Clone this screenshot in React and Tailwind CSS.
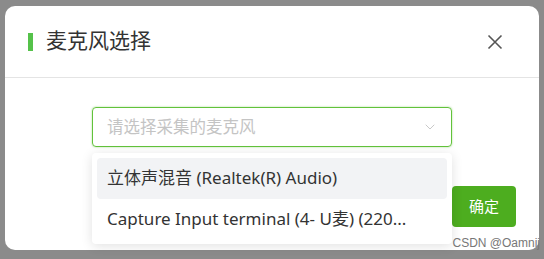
import { ChevronDown } from "lucide-react";

function App() {
  const options = [
    "立体声混音 (Realtek(R) Audio)",
    "Capture Input terminal (4- U麦) (220...",
  ];

  return (
    <div className="relative h-[259px] w-[544px] overflow-hidden bg-[#8b8b8b] pl-[5px] pt-[6px] font-['Noto_Sans','Noto_Sans_CJK_SC',sans-serif]">
      <div className="relative flex h-[244px] w-[534px] flex-col rounded-[10px] bg-white">
        {/* header */}
        <div className="flex h-[72px] shrink-0 items-center border-b border-[#e4e4e4] pl-[23px] pr-[36px]">
          <span className="h-[18px] w-[5px] bg-[#55c24a]" />
          <h2 className="ml-[13px] mb-[2px] text-[21px] leading-none text-[#333]">麦克风选择</h2>
          <button className="ml-auto text-[#555]">
            <svg width="16" height="16" viewBox="0 0 16 16" fill="none" stroke="currentColor" strokeWidth="1.6">
              <path d="M1.5 1.5 L14.5 14.5 M14.5 1.5 L1.5 14.5" />
            </svg>
          </button>
        </div>

        {/* body */}
        <div className="pl-[87px] pt-[29px]">
          <div className="flex h-[40px] w-[360px] items-center justify-between rounded-[4px] border border-[#62c23b] pl-[14px] pr-[13px] shadow-[0_0_2px_rgba(98,194,59,0.6)]">
            <span className="text-[16.5px] text-[#c4c4c4]">请选择采集的麦克风</span>
            <ChevronDown className="h-[16px] w-[16px] text-[#c0c0c0]" strokeWidth={1.3} />
          </div>
        </div>

        {/* footer */}
        <div className="mt-[39px] flex justify-end pr-[23px]">
          <button className="h-[41px] w-[64px] rounded-[4px] bg-[#4dad1f] text-[15px] text-white">
            确定
          </button>
        </div>

        {/* dropdown */}
        <div className="absolute left-[87px] top-[147px] w-[360px] rounded-[4px] bg-white p-[5px] pb-[4px] shadow-[0_2px_12px_rgba(0,0,0,0.12)]">
          {options.map((opt, i) => (
            <div
              key={opt}
              className={
                "flex h-[41px] items-center rounded-[4px] pb-[2px] pl-[10px] text-[17px] text-[#333] " +
                (i === 0 ? "bg-[#f2f3f5]" : "")
              }
            >
              {opt}
            </div>
          ))}
        </div>
      </div>

      <span className="absolute bottom-[10px] right-[4px] text-[12px] leading-none text-[#777] font-['Liberation_Sans',sans-serif]">
        CSDN @Oamnij
      </span>
    </div>
  );
}

export default App;
